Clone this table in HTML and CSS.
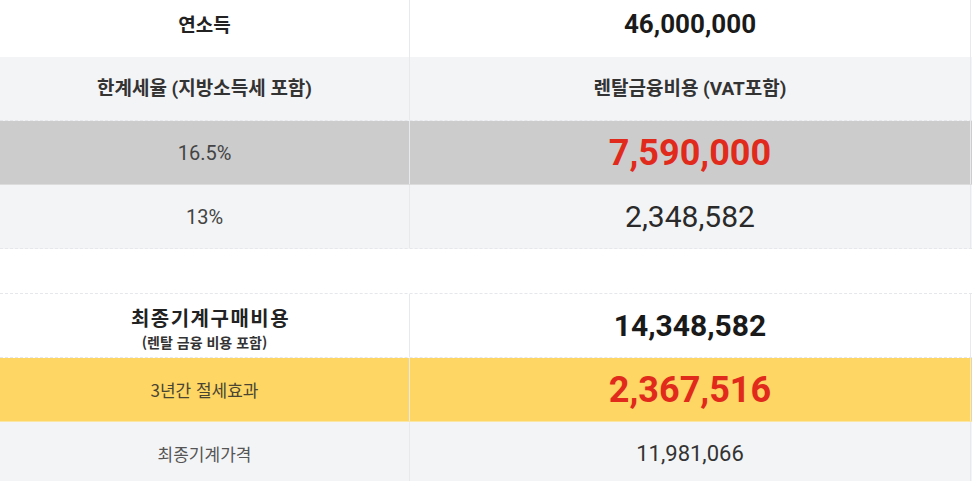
FILE: index.html
```html
<!DOCTYPE html>
<html lang="ko">
<head>
  <meta charset="UTF-8" />
  <meta name="viewport" content="width=device-width, initial-scale=1.0"/>
  <title>절세효과 계산</title>
  <link rel="stylesheet" href="styles.css">
</head>
<body>
  <div class="table">
    <div class="row first">
      <div class="cell head">연소득</div>
      <div class="cell num-bold">46,000,000</div>
    </div>
    <div class="row light">
      <div class="cell sub-head">한계세율 (지방소득세 포함)</div>
      <div class="cell sub-head">렌탈금융비용 (VAT포함)</div>
    </div>
    <div class="row gray">
      <div class="cell label">16.5%</div>
      <div class="cell num-red">7,590,000</div>
    </div>
    <div class="row light">
      <div class="cell label">13%</div>
      <div class="cell num-big">2,348,582</div>
    </div>

    <div class="spacer"></div>

    <div class="row">
      <div class="cell head stack">
        <span class="wide">최종기계구매비용</span>
        <small>(렌탈 금융 비용 포함)</small>
      </div>
      <div class="cell num-bold big">14,348,582</div>
    </div>
    <div class="row yellow">
      <div class="cell label kr">3년간 절세효과</div>
      <div class="cell num-red">2,367,516</div>
    </div>
    <div class="row light">
      <div class="cell label kr">최종기계가격</div>
      <div class="cell num-small">11,981,066</div>
    </div>
  </div>
</body>
</html>
```

FILE: styles.css
```css
body {
  margin: 0;
  background-color: #ffffff;
  color: #222;
  font-family: Roboto, "Noto Sans CJK KR", sans-serif;
}
.table {
  width: 972px;
}
.row {
  display: grid;
  grid-template-columns: 410px 561px;
  height: 64px;
  border-bottom: 1px dashed #e6e7ea;
  box-sizing: border-box;
  background-color: #ffffff;
}
.row.first {
  height: 57px;
  border-bottom: none;
}
.row.first .cell {
  padding-bottom: 10px;
}
.row.light {
  background-color: #f3f4f6;
}
.row.gray {
  background-color: #cccccc;
  border-bottom: 1px solid #dcdcdc;
}
.row.yellow {
  background-color: #fdd663;
  border-bottom: 1px solid #fbe6a4;
}
.cell {
  display: flex;
  align-items: center;
  justify-content: center;
  box-sizing: border-box;
}
.cell:first-child {
  border-right: 1px solid #e8e9ec;
}
.cell:last-child {
  border-right: 1px solid #e8e9ec;
}
.spacer {
  height: 44px;
  border-bottom: 1px dashed #e6e7ea;
}
.head {
  font-family: "Noto Sans CJK KR", sans-serif;
  font-weight: 700;
  font-size: 19px;
  color: #222;
}
.sub-head {
  font-family: Roboto, "Noto Sans CJK KR", sans-serif;
  font-weight: 700;
  font-size: 19px;
  color: #333;
  padding-bottom: 4px;
}
.stack {
  flex-direction: column;
  padding-top: 3px;
}
.stack .wide {
  display: block;
  font-size: 20px;
  line-height: 29px;
  letter-spacing: 1.5px;
  padding-left: 12px;
}
.stack small {
  display: block;
  font-size: 14px;
  line-height: 20px;
  color: #333;
}
.label {
  font-size: 20px;
  color: #444;
}
.label.kr {
  font-family: "Noto Sans CJK KR", sans-serif;
  font-size: 17px;
  color: #4a4433;
}
.row.light .label.kr {
  color: #555;
}
.num-bold {
  font-weight: 700;
  font-size: 26px;
  color: #1a1a1a;
}
.num-bold.big {
  font-size: 30px;
}
.num-red {
  font-weight: 700;
  font-size: 36px;
  color: #e12a1c;
}
.num-big {
  font-size: 30px;
  color: #2a2a2a;
}
.num-small {
  font-size: 22px;
  color: #333;
}
```
